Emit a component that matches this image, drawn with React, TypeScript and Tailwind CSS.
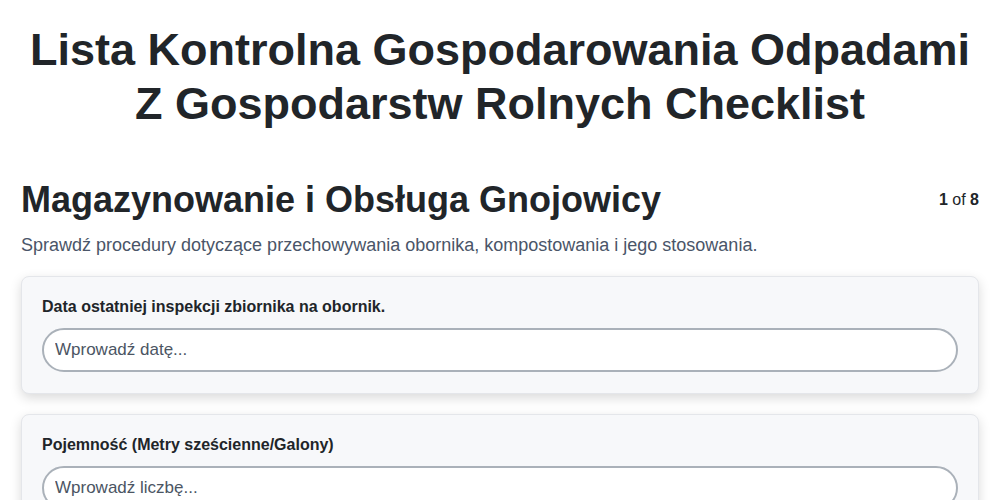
import React from "react";

const font = { fontFamily: '"Liberation Sans", Arial, sans-serif' };

function Field({ label, placeholder }: { label: string; placeholder: string }) {
  return (
    <div className="rounded-lg border border-[#e4e6ea] bg-[#f7f8fa] px-[20px] pt-[20px] pb-[21px] shadow-[0_4px_12px_rgba(0,0,0,0.15)]">
      <div className="text-[16px] font-bold leading-[20px] text-[#212529]">{label}</div>
      <input
        className="mt-[11px] block h-[44px] w-full rounded-full border-2 border-[#aab1b9] bg-white px-[11px] text-[17px] text-[#212529] placeholder:text-[#4b5563] outline-none"
        placeholder={placeholder}
        style={font}
      />
    </div>
  );
}

export default function App() {
  return (
    <div className="min-h-[500px] bg-white px-[21px] text-[#212529]" style={font}>
      <h1 className="pt-[23px] text-center text-[45px] font-bold leading-[54px] text-[#212529]">
        Lista Kontrolna Gospodarowania Odpadami
        <br />Z Gospodarstw Rolnych Checklist
      </h1>
      <div className="mt-[47px] flex items-start justify-between">
        <h2 className="text-[36px] font-bold leading-[43px] text-[#212529]">
          Magazynowanie i Obsługa Gnojowicy
        </h2>
        <div className="pt-[10px] text-[16px] text-[#212529]">
          <span className="font-bold">1</span> of <span className="font-bold">8</span>
        </div>
      </div>
      <p className="mt-[11px] text-[18px] leading-[27px] text-[#4a5568]">
        Sprawdź procedury dotyczące przechowywania obornika, kompostowania i jego stosowania.
      </p>
      <div className="mt-[17px] flex flex-col gap-[20px]">
        <Field label="Data ostatniej inspekcji zbiornika na obornik." placeholder="Wprowadź datę..." />
        <Field label="Pojemność (Metry sześcienne/Galony)" placeholder="Wprowadź liczbę..." />
      </div>
    </div>
  );
}
